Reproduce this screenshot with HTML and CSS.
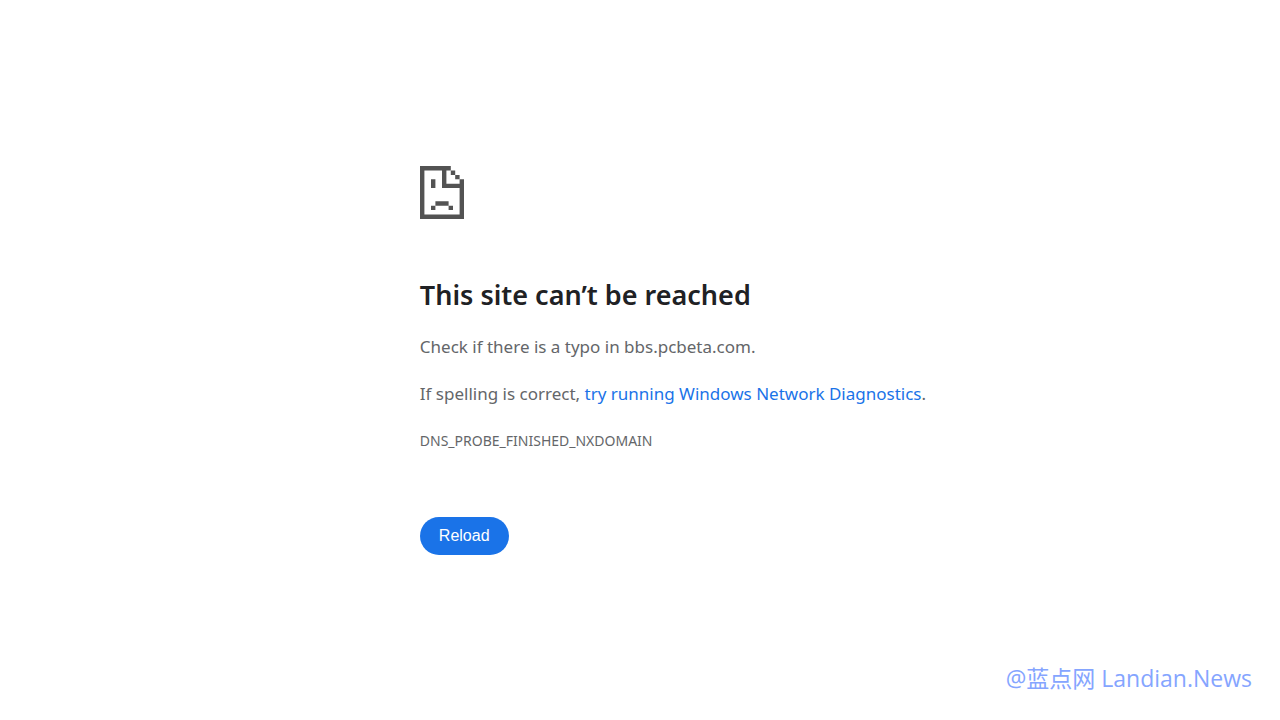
FILE: index.html
```html
<!DOCTYPE html>
<html lang="en">
<head>
    <meta charset="UTF-8">
    <meta name="viewport" content="width=device-width, initial-scale=1.0">
    <title>bbs.pcbeta.com</title>
    <link rel="stylesheet" href="styles.css">
</head>
<body>

<main class="error-page">
    <!-- Sad page icon, drawn on a 20x24 grid -->
    <svg class="error-icon" viewBox="0 0 20 24" aria-hidden="true">
        <path d="M0 0H14V2H12V8H18V6H20V24H0ZM2 2V22H18V10H10V2Z" fill-rule="evenodd"/>
        <path d="M14 2h2v2h-2zM16 4h2v2h-2zM5 6h2v4h-2zM7 16h6v2h-6zM5 18h2v2h-2zM13 18h2v2h-2z"/>
    </svg>

    <h1>This site can’t be reached</h1>
    <p>Check if there is a typo in bbs.pcbeta.com.</p>
    <p>If spelling is correct, <a href="#">try running Windows Network Diagnostics</a>.</p>
    <p class="error-code">DNS_PROBE_FINISHED_NXDOMAIN</p>

    <button type="button" class="reload">Reload</button>
</main>

<footer class="watermark">@蓝点网 Landian.News</footer>

</body>
</html>
```
FILE: styles.css
```css
* {
    box-sizing: border-box;
}
body {
    font-family: "Segoe UI", "Noto Sans", "Noto Sans CJK SC", sans-serif;
    background-color: #fff;
    color: #646669;
    margin: 0;
    min-height: 100vh;
    display: flex;
    flex-direction: column;
    justify-content: space-between;
}
.error-page {
    padding: 166px 24px 0 32.8%;
}
.error-icon {
    display: block;
    width: 44px;
    height: 53px;
    fill: #535353;
}
h1 {
    font-size: 27px;
    font-weight: 600;
    line-height: 36px;
    color: #202124;
    margin: 58px 0 20px;
}
p {
    font-size: 17px;
    line-height: 28px;
    margin: 0 0 19px;
}
a {
    color: #1a73e8;
    text-decoration: none;
}
.error-code {
    font-size: 14px;
    margin-bottom: 62px;
}
.reload {
    display: block;
    font-family: "Liberation Sans", Arial, sans-serif;
    font-size: 16px;
    line-height: 22px;
    color: #fff;
    background-color: #1a73e8;
    border: none;
    border-radius: 20px;
    padding: 8px 19px;
    cursor: pointer;
}
.watermark {
    font-family: "Segoe UI", "Open Sans", "Noto Sans CJK SC", sans-serif;
    font-size: 23px;
    line-height: 32px;
    color: #85a5ff;
    text-align: right;
    padding: 0 28px 26px 0;
}
```
